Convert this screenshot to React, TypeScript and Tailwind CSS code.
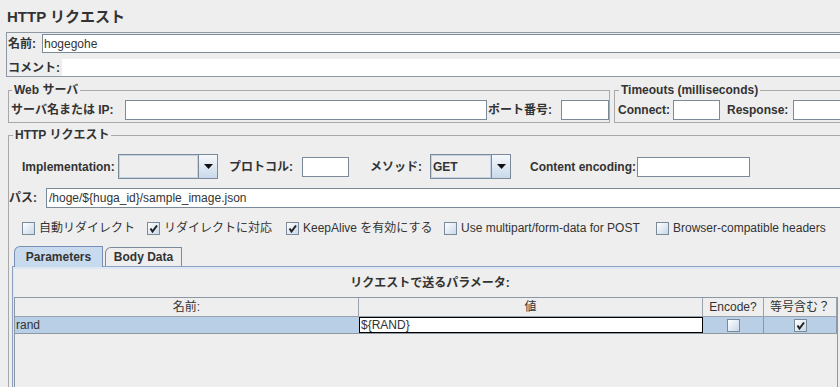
import React from 'react';

const Field = ({ w, value, className = '' }: { w?: string; value?: string; className?: string }) => (
  <div className={`h-[20px] border border-[#7a8a99] bg-white pl-[2px] flex items-center leading-[16px] ${w ?? 'flex-1'} ${className}`}>
    {value}
  </div>
);

const Combo = ({ w, value }: { w: string; value?: string }) => (
  <div className={`flex h-[25px] border border-[#7a8a99] bg-[#eeeeee] ${w}`}>
    <div className="flex-1 flex items-center border border-[#c3d3e5] pl-[1px] font-bold leading-[16px]">{value}</div>
    <div className="w-[19px] flex items-center justify-center border-l border-[#7a8a99] bg-gradient-to-b from-[#f5f8fb] to-[#c9d9ea]">
      <svg width="9" height="5" viewBox="0 0 9 5">
        <path d="M0 0H9L4.5 5Z" fill="#111" />
      </svg>
    </div>
  </div>
);

const Check = ({ on }: { on?: boolean }) => (
  <div className="w-[13px] h-[13px] shrink-0 border border-[#7a8a99] bg-gradient-to-br from-[#ffffff] to-[#c8d8ea] flex items-center justify-center">
    {on && (
      <svg width="9" height="9" viewBox="0 0 9 9">
        <path d="M1.5 4.5L3.5 7.5L8 1.5" stroke="#222" strokeWidth="2" fill="none" />
      </svg>
    )}
  </div>
);

const CheckItem = ({ w, label, on }: { w: string; label: string; on?: boolean }) => (
  <div className={`flex items-center gap-[4px] ${w}`}>
    <Check on={on} />
    <span className="leading-[14px] whitespace-nowrap">{label}</span>
  </div>
);

export default function App() {
  return (
    <div className="w-[840px] h-[387px] overflow-hidden bg-[#eeeeee] text-[12px] text-[#333333] font-['Liberation_Sans','Noto_Sans_CJK_JP',sans-serif]">
      {/* title */}
      <div className="h-[32px] pl-[7px] pt-[7px] text-[15px] font-bold leading-[20px] whitespace-nowrap">HTTP リクエスト</div>

      {/* name / comment */}
      <div className="ml-[6px] w-[840px] border border-[#8e98a2] pt-[1px]">
        <div className="flex h-[19px] items-center">
          <div className="w-[35px] pl-[1px] font-bold leading-[16px]">名前:</div>
          <div className="flex-1 h-[19px] border border-[#7a8a99] bg-white pl-[1px] flex items-center leading-[16px]">hogegohe</div>
        </div>
        <div className="flex h-[17px] mt-[6px] items-center">
          <div className="w-[55px] pl-[1px] font-bold leading-[16px] whitespace-nowrap">コメント:</div>
          <div className="flex-1 h-[17px] bg-white" />
        </div>
      </div>

      {/* server + timeouts */}
      <div className="flex mt-[6px]">
        <fieldset className="ml-[8px] w-[605px] border border-[#a9a9a9] pb-[2px]">
          <legend className="ml-[3px] px-[2px] font-bold leading-[14px] whitespace-nowrap">Web サーバ</legend>
          <div className="flex items-center h-[20px] mt-[3px] pl-[2px]">
            <div className="w-[114px] font-bold whitespace-nowrap leading-[16px]">サーバ名または IP:</div>
            <Field w="w-[362px]" />
            <div className="w-[74px] font-bold whitespace-nowrap leading-[16px] pl-[1px]">ポート番号:</div>
            <Field w="w-[48px]" />
          </div>
        </fieldset>
        <fieldset className="ml-[4px] w-[300px] border border-[#a9a9a9] pb-[2px]">
          <legend className="ml-[4px] px-[2px] font-bold leading-[14px] whitespace-nowrap">Timeouts (milliseconds)</legend>
          <div className="flex items-center h-[20px] mt-[3px] pl-[3px]">
            <div className="w-[55px] font-bold leading-[16px]">Connect:</div>
            <Field w="w-[47px]" />
            <div className="ml-[7px] w-[66px] font-bold leading-[16px]">Response:</div>
            <Field w="w-[80px]" />
          </div>
        </fieldset>
      </div>

      {/* http request */}
      <fieldset className="ml-[8px] mt-[5px] w-[840px] border border-[#a9a9a9]">
        <legend className="ml-[4px] px-[2px] font-bold leading-[14px] whitespace-nowrap">HTTP リクエスト</legend>

        <div className="flex items-center h-[25px] mt-[12px] pl-[13px] font-bold leading-[16px] whitespace-nowrap">
          <div className="w-[96px]">Implementation:</div>
          <Combo w="w-[100px]" />
          <div className="ml-[11px] w-[73px]">プロトコル:</div>
          <Field w="w-[47px]" />
          <div className="ml-[21px] w-[60px]">メソッド:</div>
          <Combo w="w-[81px]" value="GET" />
          <div className="ml-[19px] w-[107px]">Content encoding:</div>
          <Field w="w-[113px]" />
        </div>

        <div className="flex items-center h-[20px] mt-[9px]">
          <div className="w-[37px] font-bold leading-[16px] whitespace-nowrap">パス:</div>
          <Field value="/hoge/${huga_id}/sample_image.json" />
        </div>

        <div className="flex items-center h-[14px] mt-[13px] pl-[13px]">
          <CheckItem w="w-[125px]" label="自動リダイレクト" />
          <CheckItem w="w-[139px]" label="リダイレクトに対応" on />
          <CheckItem w="w-[158px]" label="KeepAlive を有効にする" on />
          <CheckItem w="w-[212px]" label="Use multipart/form-data for POST" />
          <CheckItem w="w-[180px]" label="Browser-compatible headers" />
        </div>

        {/* tabs */}
        <div className="ml-[3px] mt-[11px]">
          <div className="flex items-end pl-[2px] h-[20px] font-bold leading-[16px]">
            <div className="relative z-10 w-[89px] h-[21px] -mb-[1px] border border-b-0 border-[#7a8fb5] rounded-tl-[6px] bg-[#c8daee] flex items-center justify-center">
              Parameters
            </div>
            <div className="ml-[2px] w-[77px] h-[19px] border border-b-0 border-[#7a8a99] rounded-tl-[6px] bg-[#eeeeee] flex items-center justify-center">
              Body Data
            </div>
          </div>
          <div className="border border-[#8aa2c6] h-[220px]">
            <div className="border-t-2 border-l border-[#dce7f3] h-full">
              <div className="h-[28px] flex items-center justify-center font-bold leading-[16px]">リクエストで送るパラメータ:</div>
              <div className="w-[824px] h-[200px] border border-[#8e98a2] bg-[#eeeeee]">
                <div className="flex h-[19px] leading-[16px] text-center">
                  <div className="w-[344px] border-r border-b border-[#9aa3ad] flex items-center justify-center">名前:</div>
                  <div className="w-[344px] border-r border-b border-[#9aa3ad] flex items-center justify-center">値</div>
                  <div className="w-[61px] border-r border-b border-[#9aa3ad] flex items-center justify-center">Encode?</div>
                  <div className="w-[73px] border-r border-b border-[#9aa3ad] flex items-center justify-center">等号含む？</div>
                </div>
                <div className="flex h-[17px] leading-[15px] bg-[#b8cfe5] border-b border-[#8e98a2]">
                  <div className="w-[344px] pl-[1px] flex items-center">rand</div>
                  <div className="w-[344px] border border-black bg-white pl-[1px] flex items-center">${'{'}RAND{'}'}</div>
                  <div className="w-[61px] border-r border-[#8e98a2] flex items-center justify-center">
                    <Check />
                  </div>
                  <div className="w-[73px] border-r border-[#8e98a2] flex items-center justify-center">
                    <Check on />
                  </div>
                </div>
              </div>
            </div>
          </div>
        </div>
      </fieldset>
    </div>
  );
}
